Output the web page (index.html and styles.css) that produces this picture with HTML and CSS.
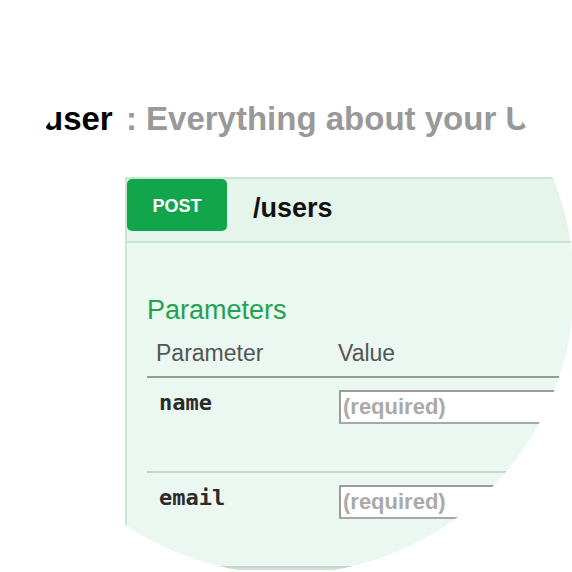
FILE: index.html
```html
<!DOCTYPE html>
<html>
<head>
<meta charset="utf-8">
<link rel="stylesheet" href="styles.css">
</head>
<body>
<div class="lens">
  <h2 class="heading"><span class="tag">user</span> : Everything about your Users</h2>
  <div class="card">
    <div class="op-head">
      <span class="method">POST</span>
      <span class="path">/users</span>
    </div>
    <div class="op-body">
      <h3 class="section-title">Parameters</h3>
      <div class="params">
        <div class="params-head">
          <div class="col-name">Parameter</div>
          <div class="col-value">Value</div>
        </div>
        <div class="param-row">
          <div class="param-name">name</div>
          <div class="param-value"><input class="field" type="text" placeholder="(required)"></div>
        </div>
        <div class="param-row">
          <div class="param-name">email</div>
          <div class="param-value"><input class="field" type="text" placeholder="(required)"></div>
        </div>
      </div>
    </div>
  </div>
</div>
</body>
</html>
```
FILE: styles.css
```css
html, body {
  margin: 0;
  padding: 0;
  background: #ffffff;
}

.lens {
  width: 572px;
  height: 572px;
  overflow: hidden;
  background: #ffffff;
  clip-path: circle(288px at 286px 286px);
  font-family: "Liberation Sans", Arial, sans-serif;
}

.heading {
  margin: 0;
  padding: 99px 0 0 43px;
  font-size: 33px;
  line-height: 40px;
  font-weight: bold;
  color: #999999;
  white-space: nowrap;
}

.tag {
  margin-right: 4px;
  color: #000000;
}

.card {
  margin: 38px 0 0 125px;
  width: 520px;
  border: 2px solid #c4e8d2;
  background: #ebf7f1;
}

.op-head {
  display: flex;
  align-items: flex-start;
  height: 62px;
  background: #e5f5eb;
  border-bottom: 2px solid #c4e8d2;
}

.method {
  display: flex;
  align-items: center;
  justify-content: center;
  width: 100px;
  height: 52px;
  padding-top: 3px;
  box-sizing: border-box;
  background: #12a54c;
  border-radius: 5px;
  color: #ffffff;
  font-size: 18px;
  font-weight: bold;
}

.path {
  margin-left: 26px;
  padding-top: 3px;
  line-height: 52px;
  font-size: 27px;
  font-weight: bold;
  color: #111111;
}

.op-body {
  padding: 52px 0 0 20px;
}

.section-title {
  margin: 0;
  font-size: 27px;
  line-height: 30px;
  font-weight: normal;
  color: #1fa350;
}

.params {
  margin-top: 15px;
}

.params-head {
  display: grid;
  grid-template-columns: 191px 1fr;
  padding-bottom: 10px;
  border-bottom: 2px solid #9a9a9a;
  font-size: 23px;
  line-height: 26px;
  color: #555555;
}

.col-name {
  padding-left: 9px;
}

.param-row {
  display: grid;
  grid-template-columns: 191px 1fr;
  align-items: start;
  padding: 12px 0 47px;
  border-bottom: 2px solid #cfcfcf;
}

.param-name {
  padding-left: 12px;
  font-family: "DejaVu Sans Mono", monospace;
  font-weight: bold;
  font-size: 22px;
  line-height: 26px;
  color: #2b2b2b;
}

.param-value {
  padding-left: 1px;
}

.field {
  display: block;
  box-sizing: border-box;
  width: 260px;
  height: 34px;
  margin: 0;
  padding: 0 2px;
  border: 2px solid #a8a8a8;
  border-top-color: #9c9c9c;
  border-left-color: #9c9c9c;
  background: #ffffff;
  font-family: "Liberation Sans", Arial, sans-serif;
  font-size: 22px;
  font-weight: bold;
  color: #333333;
  outline: none;
}

.field::placeholder {
  color: #aaaaaa;
  opacity: 1;
}
```
